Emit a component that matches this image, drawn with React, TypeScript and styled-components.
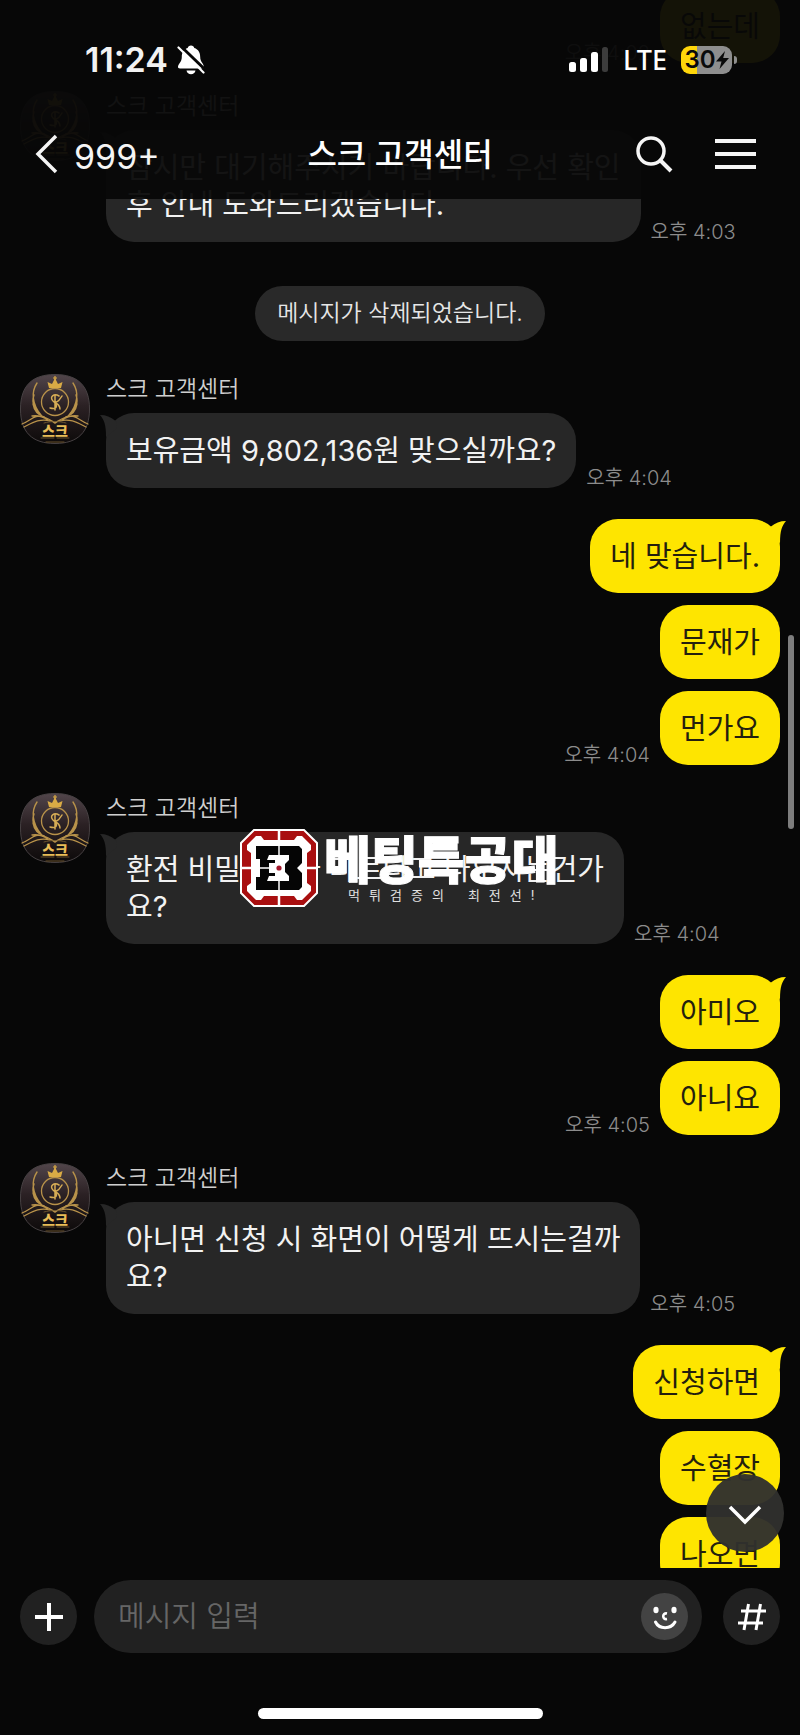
import React from 'react';
import styled, { createGlobalStyle, css } from 'styled-components';

const GlobalStyle = createGlobalStyle`
  *, *::before, *::after { box-sizing: border-box; }
  body {
    margin: 0;
    background: #070707;
    color: #f2f2f2;
    font-family: Inter, "Noto Sans CJK KR", sans-serif;
  }
  button, input { font: inherit; color: inherit; }
`;

const Screen = styled.div`
  display: grid;
  grid-template-rows: 199px minmax(0, 1fr) auto;
  grid-template-columns: minmax(0, 1fr);
  height: 100vh;
  min-height: 600px;
  background: #070707;
`;

/* ---------- top bars ---------- */

const TopBar = styled.header`
  grid-row: 1;
  grid-column: 1;
  z-index: 2;
  display: flex;
  flex-direction: column;
  background: rgba(7, 7, 7, 0.95);
`;

const StatusBar = styled.div`
  display: flex;
  justify-content: space-between;
  align-items: center;
  height: 109px;
  padding: 11px 68px 0 85px;
`;

const StatusGroup = styled.div<{ $gap: number }>`
  display: flex;
  align-items: center;
  gap: ${(p) => p.$gap}px;
`;

const Clock = styled.time`
  font-size: 34px;
  font-weight: 600;
  line-height: 40px;
`;

const Network = styled.span`
  font-family: "Noto Sans", sans-serif;
  font-size: 27px;
  font-weight: 500;
  line-height: 32px;
  color: #fff;
`;

const Battery = styled.div`
  position: relative;
  display: flex;
  align-items: center;
  justify-content: center;
  width: 51px;
  height: 28px;
  border-radius: 9px;
  background: linear-gradient(90deg, #ffd60a 16px, #8e8e8e 16px);
  color: #0a0a0a;
  font-size: 24px;
  font-weight: 600;
  line-height: 28px;

  &::after {
    content: "";
    position: absolute;
    left: 53px;
    top: 10px;
    width: 3px;
    height: 8px;
    border-radius: 0 4px 4px 0;
    background: #8e8e8e;
  }
`;

const NavBar = styled.nav`
  display: grid;
  grid-template-columns: 1fr auto 1fr;
  align-items: center;
  flex: 1;
  padding: 0 34px;
`;

const IconButton = styled.button`
  display: inline-flex;
  align-items: center;
  gap: 15px;
  padding: 0;
  border: 0;
  background: none;
  color: #f5f5f5;
  cursor: pointer;
`;

const BackCount = styled.span`
  padding-top: 6px;
  font-size: 34px;
  line-height: 40px;
`;

const Title = styled.h1`
  margin: 0;
  padding-top: 2px;
  font-size: 32px;
  font-weight: 500;
  line-height: 40px;
  color: #fff;
`;

const NavActions = styled.div`
  display: flex;
  justify-content: flex-end;
  align-items: center;
  gap: 41px;
  padding-right: 10px;
`;

/* ---------- conversation ---------- */

const Conversation = styled.main`
  grid-row: 1 / 3;
  grid-column: 1;
  position: relative;
  overflow: hidden;
`;

const Thread = styled.ol`
  display: flex;
  flex-direction: column;
  margin: -23px 0 0;
  padding: 0 20px;
  list-style: none;
`;

const Incoming = styled.li`
  display: flex;
  align-items: flex-start;
  gap: 16px;
  margin-top: 28px;
`;

const IncomingBody = styled.div`
  display: flex;
  flex-direction: column;
  gap: 9px;
`;

const Sender = styled.span`
  font-size: 23px;
  font-weight: 350;
  line-height: 30px;
  color: #cfcfcf;
`;

const BubbleLine = styled.div`
  display: flex;
  align-items: flex-end;
  gap: 10px;
`;

const Outgoing = styled.li<{ $first?: boolean }>`
  display: flex;
  justify-content: flex-end;
  align-items: flex-end;
  gap: 10px;
  margin-top: ${(p) => (p.$first ? 31 : 12)}px;
`;

const Bubble = styled.p<{ $mine?: boolean }>`
  position: relative;
  margin: 0;
  padding: 19px 20px;
  border-radius: 28px;
  font-size: 29px;
  font-weight: 400;
  line-height: 37px;
  white-space: pre;
  background: #272727;
  color: #f2f2f2;
  ${(p) =>
    p.$mine &&
    css`
      padding: 19px 20px 18px;
      background: #fee500;
      color: #241f0e;
    `}
`;

const TailShape = styled.svg<{ $mine?: boolean }>`
  position: absolute;
  top: 2px;
  ${(p) => (p.$mine ? 'right: -6px;' : 'left: -6px; transform: scaleX(-1);')}
`;

const SentAt = styled.time`
  font-size: 20px;
  font-weight: 350;
  line-height: 20px;
  color: #8c8c8c;
  white-space: nowrap;
`;

const Notice = styled.li`
  align-self: center;
  margin: 44px 0 5px;
  padding: 13px 22px 14px;
  border-radius: 28px;
  background: #292929;
  font-size: 23px;
  font-weight: 350;
  line-height: 28px;
  color: #e6e6e6;
`;

const ScrollThumb = styled.div`
  position: absolute;
  right: 6px;
  top: 635px;
  width: 6px;
  height: 194px;
  border-radius: 3px;
  background: #7d7d7d;
`;

const JumpButton = styled.button`
  position: absolute;
  right: 16px;
  bottom: 16px;
  display: flex;
  align-items: center;
  justify-content: center;
  width: 78px;
  height: 78px;
  padding: 4px 0 0;
  border: 0;
  border-radius: 50%;
  background: rgba(48, 48, 46, 0.96);
  cursor: pointer;
`;

const Watermark = styled.div`
  position: absolute;
  left: 240px;
  top: 829px;
  display: flex;
  gap: 6px;
  color: #fff;
  pointer-events: none;
`;

const WatermarkText = styled.div`
  display: flex;
  flex-direction: column;
  align-items: center;
`;

const WatermarkName = styled.strong`
  font-family: "Noto Sans CJK KR", sans-serif;
  font-size: 51px;
  font-weight: 900;
  line-height: 57px;
  -webkit-text-stroke: 1px #fff;
`;

const WatermarkMotto = styled.span`
  display: flex;
  gap: 9px;
  font-size: 13px;
  font-weight: 400;
  line-height: 18px;
  color: #e0e0e0;
`;

const MottoWord = styled.span`
  display: flex;
  gap: 9px;
  & + & { margin-left: 15px; }
`;

/* ---------- composer ---------- */

const Footer = styled.footer`
  grid-row: 3;
  grid-column: 1;
  display: flex;
  flex-direction: column;
  align-items: center;
  gap: 55px;
  padding: 12px 20px 16px;
`;

const Composer = styled.form`
  display: flex;
  align-items: center;
  width: 100%;
`;

const RoundButton = styled.button<{ $size: number; $tone: string }>`
  display: flex;
  flex: none;
  align-items: center;
  justify-content: center;
  width: ${(p) => p.$size}px;
  height: ${(p) => p.$size}px;
  padding: 0;
  border: 0;
  border-radius: 50%;
  background: ${(p) => p.$tone};
  cursor: pointer;
`;

const Field = styled.div`
  display: flex;
  flex: 1;
  align-items: center;
  height: 73px;
  margin: 0 21px 0 17px;
  padding: 0 14px 0 24px;
  border-radius: 37px;
  background: #212121;
`;

const MessageInput = styled.input`
  flex: 1;
  min-width: 0;
  padding: 0;
  border: 0;
  outline: 0;
  background: none;
  font-size: 29px;
  font-weight: 350;
  line-height: 37px;
  &::placeholder { color: #666; opacity: 1; }
`;

const HomeIndicator = styled.div`
  width: 285px;
  height: 11px;
  border-radius: 6px;
  background: #fff;
`;

/* ---------- drawings ---------- */

const AvatarDrawing = styled.svg`
  flex: none;
  display: block;
`;

function Avatar() {
  const wing = (
    <g>
      <path d="M17 9C11 18 12 30 21 41M14 21C11 29 15 37 22 42M13 30C14 36 18 41 24 43" strokeWidth="1.4" />
      <path d="M2 50C12 46 14 40 24 43C30 45 33 48 35 49M4 53C12 49 20 44 30 47M12 42C18 41 22 42 28 46" strokeWidth="1.3" />
    </g>
  );
  return (
    <AvatarDrawing width="70" height="70" viewBox="0 0 70 70" role="img" aria-label="스크">
      <defs>
        <linearGradient id="plate" x1="0" y1="0" x2="0" y2="1">
          <stop offset="0" stopColor="#51454a" />
          <stop offset="0.45" stopColor="#2b2124" />
          <stop offset="1" stopColor="#0d0a0a" />
        </linearGradient>
      </defs>
      <path
        d="M35 .5C58 .5 69.500 12 69.500 35S58 69.500 35 69.500S.5 58 .5 35S12 .5 35 .5Z"
        fill="url(#plate)"
        stroke="#474143"
      />
      <g fill="none" stroke="#b8924a" strokeLinecap="round">
        {wing}
        <g transform="translate(70 0) scale(-1 1)">{wing}</g>
        <circle cx="35" cy="28" r="13.500" strokeWidth="1.300" />
        <path d="M24 49C31 47 39 47 46 49M21 64H34M37 64H49M26 68H44" strokeWidth="0.800" stroke="#7d6233" />
        <path d="M39 22C34 19 29 23 33 27C38 31 38 36 30 34M35 21V36M42 22C40 26 37 28 35 29C38 29 40 33 40 35" stroke="#d6ac55" strokeWidth="1.500" />
      </g>
      <path d="M29 14L27.500 8L32 10L35 4L38 10L42.500 8L41 14Z" fill="#d9ab45" />
      <path d="M35 2V8M33 4H37" stroke="#d9ab45" strokeWidth="1.200" />
      <text x="35" y="62" textAnchor="middle" fontSize="14" fontWeight="900" fontFamily='"Noto Sans CJK KR", sans-serif' fill="#e9bd57">
        스크
      </text>
    </AvatarDrawing>
  );
}

function Tail({ mine }: { mine?: boolean }) {
  return (
    <TailShape $mine={mine} width="20" height="22" viewBox="0 0 20 22" aria-hidden="true">
      <path d="M3 7L5 5.500C9 2 14 0 20 0C16 5 14 9 14 22L4 14Z" fill={mine ? '#fee500' : '#272727'} />
    </TailShape>
  );
}

function BellOff() {
  return (
    <svg width="28" height="30" viewBox="0 0 28 30" aria-label="무음">
      <path d="M14 0.500C15.800 0.500 17 1.500 17.300 3C21.500 4.300 23.200 8 23.200 12C23.200 17 26.800 18.500 26.800 21.800C26.800 23 26 23.500 25 23.500H3C1.500 23.500 .8 22.700 1 21.500C1.500 18.500 4.800 17 4.800 12C4.800 8 6.500 4.300 10.700 3C11 1.500 12.200 .5 14 .5Z" fill="#fff" />
      <path d="M9.500 25.500H18.500C18 28 16.200 29.300 14 29.300S10 28 9.500 25.500Z" fill="#fff" />
      <path d="M3.500 1L28 24.500" stroke="#070707" strokeWidth="3" />
      <path d="M1.500 2.500L26.500 27.500" stroke="#fff" strokeWidth="2.200" strokeLinecap="round" />
    </svg>
  );
}

function Signal() {
  return (
    <svg width="40" height="26" viewBox="0 0 40 26" aria-label="신호 세기">
      <g fill="#fff">
        <rect x="0" y="15" width="7" height="10" rx="2.500" />
        <rect x="11" y="11" width="7" height="14" rx="2.500" />
        <rect x="22" y="5" width="7" height="20" rx="2.500" />
      </g>
      <rect x="33" y="0" width="6" height="25" rx="2.500" fill="#3c3c3c" />
    </svg>
  );
}

function TeamLogo() {
  return (
    <svg width="78" height="78" viewBox="0 0 78 78" aria-hidden="true">
      <path d="M14 1H64L77 14V64L64 77H14L1 64V14Z" fill="#a90f10" stroke="#fff" strokeWidth="2" />
      <path d="M16 7H21L24 11H54L57 7H62L71 16V21L67 24V54L71 57V62L62 71H57L54 67H24L21 71H16L7 62V57L11 54V24L7 21V16Z" fill="#fff" />
      <path d="M39 0V78M0 39H78" stroke="#fff" strokeWidth="2.500" />
      <path d="M16 17H59L62 20V34L57 39L62 44V58L59 61H16V48H20V30H16Z" fill="#050505" />
      <path d="M29 26H49V31L45 35V43L49 47V52H27L29 47H35V44H29V34H35V31H27Z" fill="#fff" />
      <path d="M39 16V62M16 39H30" stroke="#fff" strokeWidth="1.500" />
      <circle cx="39" cy="39" r="2.600" fill="#a3172c" />
    </svg>
  );
}

/* ---------- pieces ---------- */

function TheirMessage({ text, at }: { text: string; at: string }) {
  return (
    <Incoming>
      <Avatar />
      <IncomingBody>
        <Sender>스크 고객센터</Sender>
        <BubbleLine>
          <Bubble>
            {text}
            <Tail />
          </Bubble>
          <SentAt>{at}</SentAt>
        </BubbleLine>
      </IncomingBody>
    </Incoming>
  );
}

function MyMessage({ text, at, first }: { text: string; at?: string; first?: boolean }) {
  return (
    <Outgoing $first={first}>
      {at && <SentAt>{at}</SentAt>}
      <Bubble $mine>
        {text}
        {first && <Tail mine />}
      </Bubble>
    </Outgoing>
  );
}

export default function App() {
  return (
    <Screen>
      <GlobalStyle />
      <TopBar>
        <StatusBar>
          <StatusGroup $gap={9}>
            <Clock>11:24</Clock>
            <BellOff />
          </StatusGroup>
          <StatusGroup $gap={14}>
            <Signal />
            <Network>LTE</Network>
            <Battery>
              30
              <svg width="13" height="18" viewBox="0 0 13 18" aria-hidden="true">
                <path d="M9 0L0 10.500H5.500L3.500 18L13 7H7.200Z" fill="#0a0a0a" />
              </svg>
            </Battery>
          </StatusGroup>
        </StatusBar>
        <NavBar>
          <div>
            <IconButton type="button" aria-label="뒤로, 읽지 않은 메시지 999+">
              <svg width="25" height="40" viewBox="0 0 25 40" fill="none">
                <path d="M22 2L4 20L22 38" stroke="#f5f5f5" strokeWidth="3.500" />
              </svg>
              <BackCount>999+</BackCount>
            </IconButton>
          </div>
          <Title>스크 고객센터</Title>
          <NavActions>
            <IconButton type="button" aria-label="검색">
              <svg width="37" height="37" viewBox="0 0 37 37" fill="none" stroke="#f5f5f5" strokeWidth="3.500">
                <circle cx="15" cy="15" r="13" />
                <path d="M24 24L35 35" strokeWidth="4" />
              </svg>
            </IconButton>
            <IconButton type="button" aria-label="메뉴">
              <svg width="42" height="32" viewBox="0 0 42 32" fill="#f5f5f5">
                <rect x="1" y="1" width="41" height="4" />
                <rect x="1" y="14" width="41" height="4" />
                <rect x="1" y="27" width="41" height="4" />
              </svg>
            </IconButton>
          </NavActions>
        </NavBar>
      </TopBar>

      <Conversation>
        <Thread>
          <MyMessage text="없는데" at="오후 4:02" />
          <TheirMessage text={'잠시만 대기해주시기 바랍니다. 우선 확인\n후 안내 도와드리겠습니다.'} at="오후 4:03" />
          <Notice>메시지가 삭제되었습니다.</Notice>
          <TheirMessage text="보유금액 9,802,136원 맞으실까요?" at="오후 4:04" />
          <MyMessage first text="네 맞습니다." />
          <MyMessage text="문재가" />
          <MyMessage text="먼가요" at="오후 4:04" />
          <TheirMessage text={'환전 비밀번호가 다르다고 나오시는건가\n요?'} at="오후 4:04" />
          <MyMessage first text="아미오" />
          <MyMessage text="아니요" at="오후 4:05" />
          <TheirMessage text={'아니면 신청 시 화면이 어떻게 뜨시는걸까\n요?'} at="오후 4:05" />
          <MyMessage first text="신청하면" />
          <MyMessage text="수혈장" />
          <MyMessage text="나오면" />
        </Thread>
        <Watermark>
          <TeamLogo />
          <WatermarkText>
            <WatermarkName>베팅특공대</WatermarkName>
            <WatermarkMotto>
              {['먹튀검증의', '최전선!'].map((word) => (
                <MottoWord key={word}>
                  {[...word].map((letter) => (
                    <span key={letter}>{letter}</span>
                  ))}
                </MottoWord>
              ))}
            </WatermarkMotto>
          </WatermarkText>
        </Watermark>
        <ScrollThumb />
        <JumpButton type="button" aria-label="맨 아래로">
          <svg width="34" height="20" viewBox="0 0 34 20" fill="none">
            <path d="M2 2L17 17L32 2" stroke="#fff" strokeWidth="3.500" />
          </svg>
        </JumpButton>
      </Conversation>

      <Footer>
        <Composer onSubmit={(e) => e.preventDefault()}>
          <RoundButton type="button" $size={57} $tone="#212121" aria-label="첨부">
            <svg width="28" height="28" viewBox="0 0 28 28">
              <path d="M14 0V28M0 14H28" stroke="#fff" strokeWidth="4" />
            </svg>
          </RoundButton>
          <Field>
            <MessageInput type="text" placeholder="메시지 입력" aria-label="메시지 입력" />
            <RoundButton type="button" $size={47} $tone="#434343" aria-label="이모티콘">
              <svg width="26" height="26" viewBox="0 0 26 26" fill="none" stroke="#fff">
                <ellipse cx="4" cy="6" rx="2.600" ry="3.300" fill="#fff" stroke="none" />
                <ellipse cx="22" cy="6" rx="2.600" ry="3.300" fill="#fff" stroke="none" />
                <path d="M15 9.500C10 8.500 10 16 15 15" strokeWidth="2.600" />
                <path d="M3.500 18C7 25.500 19 25.500 23 18" strokeWidth="3" strokeLinecap="round" />
              </svg>
            </RoundButton>
          </Field>
          <RoundButton type="button" $size={57} $tone="#212121" aria-label="샵 검색">
            <svg width="28" height="28" viewBox="0 0 28 28" fill="none" stroke="#fff" strokeWidth="3">
              <path d="M10.500 1L6 27M22.500 1L18 27M3 8H28M0 20H25" />
            </svg>
          </RoundButton>
        </Composer>
        <HomeIndicator />
      </Footer>
    </Screen>
  );
}
